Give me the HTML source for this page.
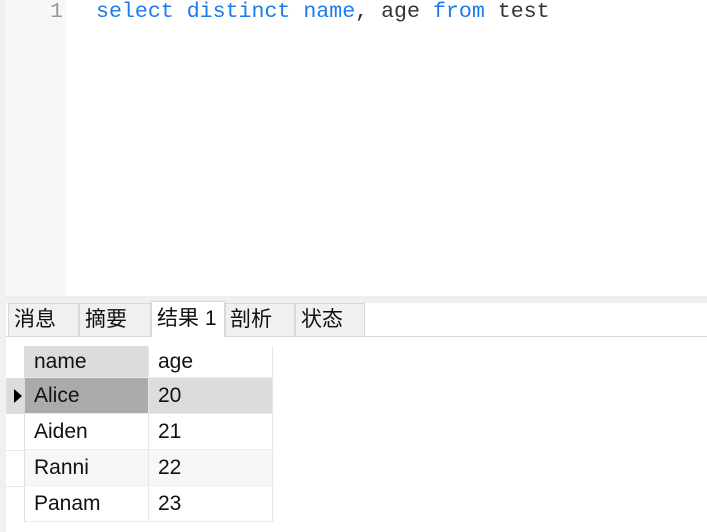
<!DOCTYPE html>
<html><head><meta charset="utf-8"><style>
*{margin:0;padding:0;box-sizing:border-box}
body{width:707px;height:532px;background:#fff;position:relative;overflow:hidden;font-family:"Liberation Sans","Noto Sans CJK SC",sans-serif}
.a{position:absolute}
.code{font-family:"Liberation Mono","DejaVu Sans Mono",monospace;font-size:21.6px;line-height:24px;white-space:pre}
.k{color:#1a7bf0}.t{color:#333}
.tab{position:absolute;top:303px;height:33px;background:#f0f0f0;border:1px solid #d8d8d8;border-bottom:none;font-size:21px;line-height:32px;padding-left:5px;color:#111}
.cell{position:absolute;height:36px;font-size:21px;line-height:36px;padding-left:9px;color:#111;border-right:1px solid #e8e8e8;border-bottom:1px solid #ececec}
</style></head><body>
<div class="a" style="left:0;top:0;width:6px;height:532px;background:#f0f0f0"></div>
<div class="a" style="left:6px;top:0;width:60px;height:296px;background:#f7f7f7"></div>
<div class="a code" style="left:50px;top:0;color:#999">1</div>
<div class="a code" style="left:96px;top:0"><span class="k">select distinct name</span><span class="t">, age </span><span class="k">from</span><span class="t"> test</span></div>
<div class="a" style="left:6px;top:296px;width:701px;height:7px;background:#efefef"></div>
<div class="a" style="left:6px;top:303px;width:701px;height:33px;background:#fff"></div>
<div class="a" style="left:6px;top:336px;width:701px;height:1px;background:#d8d8d8"></div>
<div class="tab" style="left:8px;width:71px">消息</div>
<div class="tab" style="left:79px;width:72px">摘要</div>
<div class="tab" style="left:151px;width:74px;top:301px;height:36px;background:#fff;line-height:34px">结果 1</div>
<div class="tab" style="left:225px;width:70px;padding-left:4px">剖析</div>
<div class="tab" style="left:295px;width:70px">状态</div>
<div class="a" style="left:6px;top:346px;width:19px;height:176px;border-right:1px solid #e0e0e0"></div>
<div class="a" style="left:6px;top:378px;width:19px;height:36px;background:#dcdcdc"></div>
<div class="a" style="left:14px;top:389px;width:0;height:0;border-top:7px solid transparent;border-bottom:7px solid transparent;border-left:8px solid #000"></div>
<div class="a" style="left:6px;top:450px;width:19px;height:1px;background:#e8e8e8"></div>
<div class="a" style="left:6px;top:486px;width:19px;height:1px;background:#e8e8e8"></div>
<div class="cell" style="left:25px;top:346px;width:124px;height:32px;line-height:32px;background:#dcdcdc">name</div>
<div class="cell" style="left:149px;top:346px;width:124px;height:32px;line-height:32px">age</div>
<div class="cell" style="left:25px;top:378px;width:124px;background:#ababab">Alice</div>
<div class="cell" style="left:149px;top:378px;width:124px;background:#dcdcdc">20</div>
<div class="cell" style="left:25px;top:414px;width:124px">Aiden</div>
<div class="cell" style="left:149px;top:414px;width:124px">21</div>
<div class="cell" style="left:25px;top:450px;width:124px;background:#f7f7f7">Ranni</div>
<div class="cell" style="left:149px;top:450px;width:124px;background:#f7f7f7">22</div>
<div class="cell" style="left:25px;top:486px;width:124px">Panam</div>
<div class="cell" style="left:149px;top:486px;width:124px">23</div>
</body></html>
